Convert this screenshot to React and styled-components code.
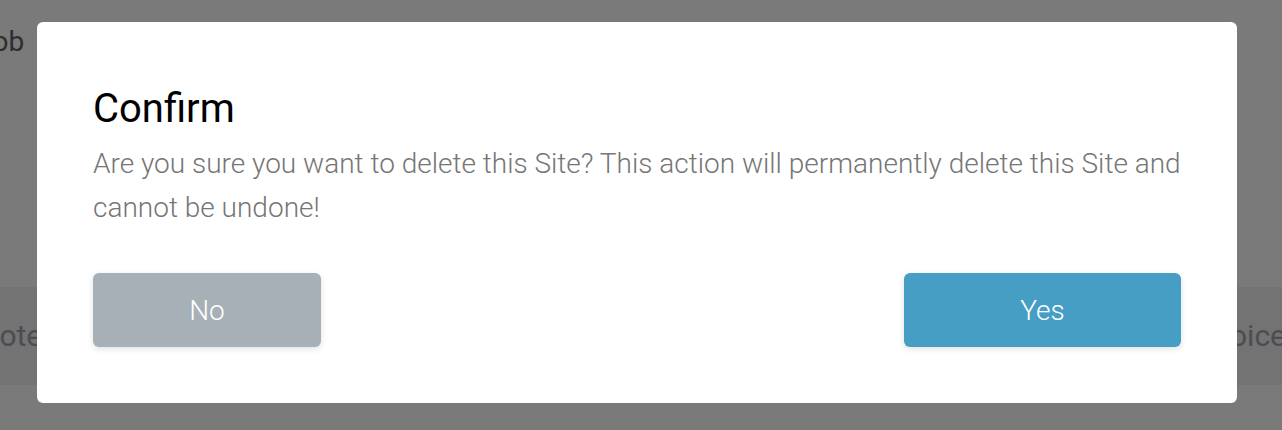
import React from 'react';
import styled, { createGlobalStyle } from 'styled-components';

const GlobalStyle = createGlobalStyle`
  * { box-sizing: border-box; }
  body {
    margin: 0;
    overflow: hidden;
    background: #ffffff;
    font-family: Roboto, "Liberation Sans", sans-serif;
  }
`;

// page behind the dialog, mostly hidden by the overlay
const Page = styled.div`
  min-height: 430px;
  padding-top: 25px;
  overflow: hidden;
`;

const PageTitle = styled.div`
  margin-left: -23px;
  font-size: 28px;
  line-height: 34px;
  color: #5c6068;
  white-space: nowrap;
`;

const Band = styled.div`
  margin: 228px -4px 0 -22px;
  height: 98px;
  display: flex;
  align-items: center;
  justify-content: space-between;
  background: #f0f0f0;
`;

const BandLabel = styled.span`
  font-size: 30px;
  line-height: 30px;
  color: #9ca2ad;
  white-space: nowrap;
`;

const Overlay = styled.div`
  position: fixed;
  inset: 0;
  background: rgba(0, 0, 0, 0.52);
  display: flex;
  justify-content: center;
  align-items: flex-start;
  padding: 22px 8px 0 0;
`;

const Dialog = styled.div`
  width: 1200px;
  background: #ffffff;
  border-radius: 6px;
  padding: 63px 56px 56px;
`;

const Title = styled.h2`
  margin: 0 0 9px;
  font-size: 40px;
  font-weight: 400;
  line-height: 48px;
  color: #000000;
`;

const Message = styled.p`
  margin: 0;
  font-size: 28px;
  font-weight: 300;
  line-height: 44px;
  color: #767676;
`;

const Actions = styled.div`
  margin-top: 43px;
  display: flex;
  justify-content: space-between;
`;

const Button = styled.button`
  width: ${p => p.$width}px;
  height: 74px;
  border: none;
  border-radius: 6px;
  background: ${p => p.$bg};
  color: #ffffff;
  font-family: Roboto, "Liberation Sans", sans-serif;
  font-size: 28px;
  font-weight: 300;
  box-shadow: 0 2px 6px rgba(0, 0, 0, 0.12);
  cursor: pointer;
`;

const App = () => {
  return (
    <>
      <GlobalStyle />
      <Page>
        <PageTitle>Job</PageTitle>
        <Band>
          <BandLabel>Note</BandLabel>
          <BandLabel>Invoice</BandLabel>
        </Band>
      </Page>
      <Overlay>
        <Dialog>
          <Title>Confirm</Title>
          <Message>
            Are you sure you want to delete this Site? This action will permanently delete this Site and cannot be undone!
          </Message>
          <Actions>
            <Button $width={228} $bg="#a6b0b6">No</Button>
            <Button $width={277} $bg="#479ec5">Yes</Button>
          </Actions>
        </Dialog>
      </Overlay>
    </>
  );
};

export default App;
